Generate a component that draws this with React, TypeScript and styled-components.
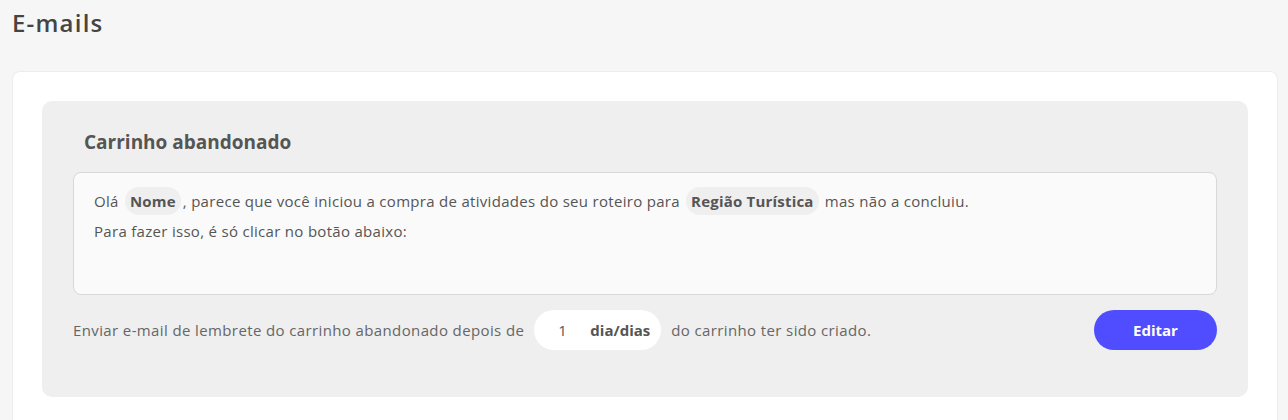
import React from "react";
import styled, { createGlobalStyle } from "styled-components";

const Global = createGlobalStyle`
  html, body { margin: 0; padding: 0; background: #f6f6f6; }
  body { font-family: "Open Sans", "Lato", sans-serif; color: #555; }
`;

const Page = styled.div`
  padding: 8px 10px 0 12px;
  display: flex;
  flex-direction: column;
`;

const Title = styled.h1`
  margin: 0;
  font-size: 24px;
  font-weight: 600;
  color: #444;
  line-height: 30px;
  letter-spacing: 1.2px;
`;

const Card = styled.div`
  margin-top: 33px;
  background: #fff;
  border: 1px solid #ececec;
  border-bottom: none;
  border-radius: 8px 8px 0 0;
  padding: 29px 29px 24px 29px;
  min-height: 340px;
`;

const Panel = styled.section`
  background: #efefef;
  border-radius: 10px;
  padding: 26px 31px 47px 31px;
  display: flex;
  flex-direction: column;
`;

const PanelTitle = styled.h2`
  margin: 0 0 15px 11px;
  font-size: 19px;
  font-weight: 700;
  color: #555;
  line-height: 30px;
`;

const Message = styled.div`
  background: #fafafa;
  border: 1px solid #d8d8d8;
  border-radius: 8px;
  height: 123px;
  padding: 13px 20px;
  box-sizing: border-box;
  font-size: 15px;
  letter-spacing: 0.3px;
  color: #555;
`;

const Line = styled.p`
  margin: 0;
  line-height: 30px;
`;

const Tag = styled.span`
  display: inline-block;
  background: #efefef;
  border-radius: 14px;
  padding: 0 5px;
  line-height: 28px;
  font-weight: 700;
  letter-spacing: 0.2px;
  color: #555;
  margin: 0 2px;
`;

const Footer = styled.div`
  display: flex;
  align-items: center;
  margin-top: 15px;
  font-size: 15px;
  letter-spacing: 0.38px;
  color: #666;
`;

const Sentence = styled.div`
  display: flex;
  align-items: center;
  gap: 10px;
  flex: 1;
`;

const DaysBox = styled.div`
  display: flex;
  align-items: center;
  justify-content: space-between;
  background: #fff;
  border-radius: 20px;
  height: 40px;
  width: 127px;
  box-sizing: border-box;
  padding: 0 11px 0 24px;
`;

const DaysInput = styled.input`
  border: none;
  outline: none;
  background: transparent;
  width: 26px;
  font: inherit;
  font-size: 15px;
  color: #555;
  padding: 0;
`;

const Unit = styled.span`
  font-weight: 700;
  letter-spacing: 0;
  color: #555;
`;

const Button = styled.button`
  width: 123px;
  height: 40px;
  border: none;
  border-radius: 20px;
  background: #4f4dff;
  color: #fff;
  font-family: inherit;
  font-size: 15px;
  font-weight: 700;
  cursor: pointer;
`;

export default function App() {
  return (
    <>
      <Global />
      <Page>
        <Title>E-mails</Title>
        <Card>
          <Panel>
            <PanelTitle>Carrinho abandonado</PanelTitle>
            <Message>
              <Line>
                Olá <Tag>Nome</Tag>, parece que você iniciou a compra de atividades do seu roteiro para{" "}
                <Tag>Região Turística</Tag> mas não a concluiu.
              </Line>
              <Line>Para fazer isso, é só clicar no botão abaixo:</Line>
            </Message>
            <Footer>
              <Sentence>
                <span>Enviar e-mail de lembrete do carrinho abandonado depois de</span>
                <DaysBox>
                  <DaysInput defaultValue="1" />
                  <Unit>dia/dias</Unit>
                </DaysBox>
                <span>do carrinho ter sido criado.</span>
              </Sentence>
              <Button>Editar</Button>
            </Footer>
          </Panel>
        </Card>
      </Page>
    </>
  );
}
